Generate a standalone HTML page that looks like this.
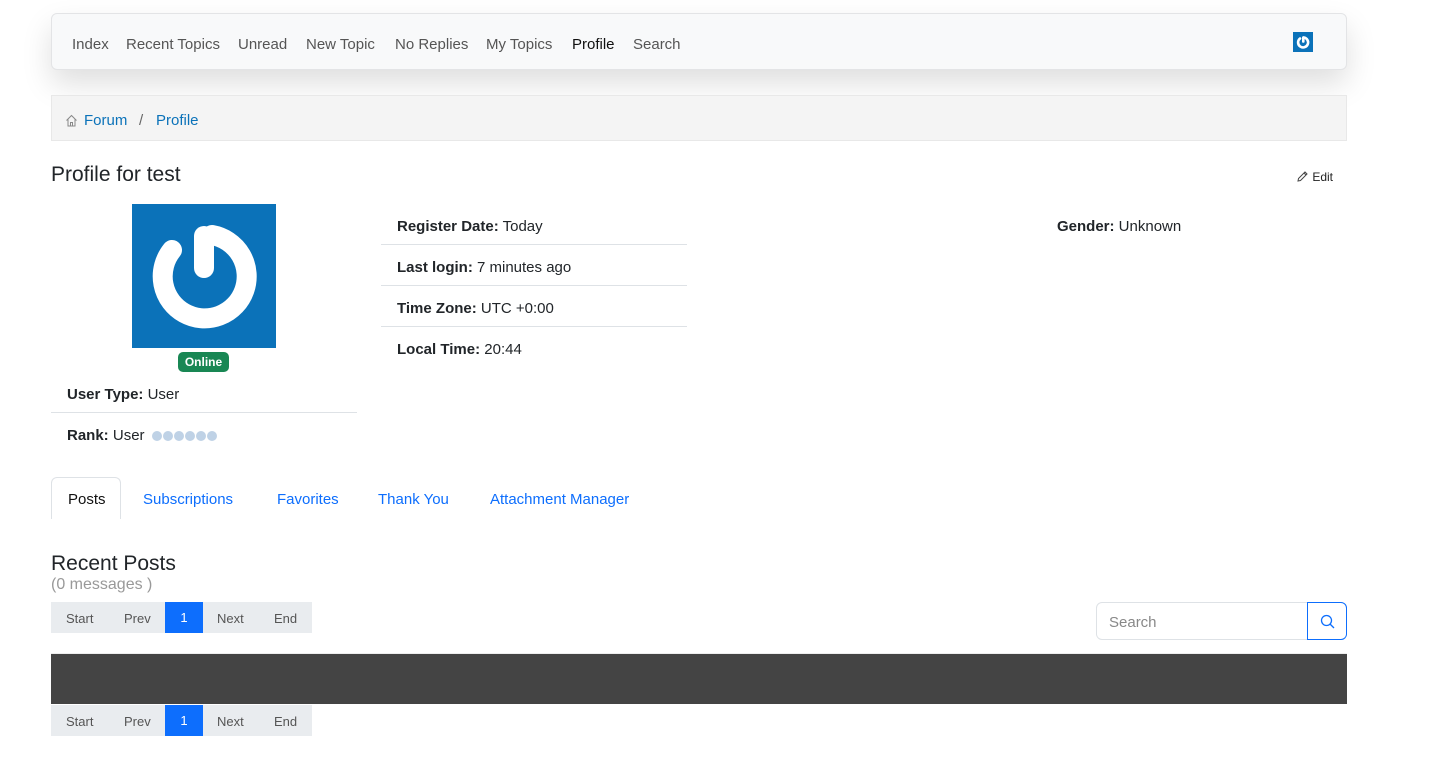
<!DOCTYPE html>
<html><head><meta charset="utf-8"><style>
*{box-sizing:border-box;margin:0;padding:0}
body{width:1439px;height:769px;background:#fff;font-family:"Liberation Sans",sans-serif;color:#212529;position:relative;overflow:hidden}
.a{position:absolute;white-space:nowrap}
.nav{left:51px;top:13px;width:1296px;height:57px;background:#f8f9fa;border:1px solid #e3e4e6;border-radius:6px;box-shadow:0 14px 30px rgba(0,0,0,.13)}
.nav span{position:absolute;top:22px;font-size:15px;color:#555}
.bc{left:51px;top:95px;width:1296px;height:46px;background:#f4f4f4;border:1px solid #e8e8e8}
.lnk{color:#0b72b9}
.row{font-size:15px}
.hr{position:absolute;height:1px;background:#dee2e6}
.pg{position:absolute;left:51px;height:31px;width:261px;background:#e9ecef;font-size:13px;color:#555}
.pg span{position:absolute;top:9px}
.pg .c{background:#0d6efd;color:#fff;top:0;height:31px;width:38px;left:114px;text-align:center;line-height:31px}
.tab{position:absolute;top:491px;font-size:15px;color:#0d6efd}
</style></head><body>
<div class="a nav">
<span style="left:20px">Index</span><span style="left:74px">Recent Topics</span><span style="left:186px">Unread</span><span style="left:254px">New Topic</span><span style="left:343px">No Replies</span><span style="left:434px">My Topics</span><span style="left:520px;color:#111">Profile</span><span style="left:581px">Search</span>
<svg style="position:absolute;left:1241px;top:18px" width="20" height="20" viewBox="0 0 20 20"><rect width="20" height="20" fill="#0b72b9"/><path d="M7 6.5A5 5 0 1 0 11 5.5" fill="none" stroke="#fff" stroke-width="2.6" stroke-linecap="round"/><path d="M10.3 5.5V9.5" stroke="#fff" stroke-width="2.6" stroke-linecap="round"/></svg>
</div>
<div class="a bc"><svg style="position:absolute;left:13px;top:18px" width="13" height="13" viewBox="0 0 13 13"><path d="M1.5 6.5L6.5 1.5L11.5 6.5M3 5.5V12H10V5.5M5.5 12V8.5H7.5V12" fill="none" stroke="#888" stroke-width="1"/></svg>
<span class="a lnk" style="left:32px;top:16px;font-size:15px">Forum</span><span class="a" style="left:87px;top:16px;font-size:15px;color:#666">/</span><span class="a lnk" style="left:104px;top:16px;font-size:15px">Profile</span></div>
<div class="a" style="left:51px;top:163px;font-size:21px">Profile for test</div>
<div class="a" style="left:1296px;top:170px;font-size:12px;color:#222"><svg width="13" height="13" viewBox="0 0 13 13" style="vertical-align:-2px"><path d="M2 11L2.5 8.5L9 2L11 4L4.5 10.5Z M8 3L10 5" fill="none" stroke="#444" stroke-width="1"/></svg> Edit</div>
<svg class="a" style="left:132px;top:204px" width="144" height="144" viewBox="0 0 144 144"><rect width="144" height="144" fill="#0b72b9"/><path d="M40 46A42 42 0 1 0 80 31" fill="none" stroke="#fff" stroke-width="20" stroke-linecap="round"/><path d="M72 32V64" stroke="#fff" stroke-width="20" stroke-linecap="round"/></svg>
<div class="a" style="left:178px;top:352px;width:51px;height:20px;background:#198754;border-radius:5px;color:#fff;font-size:12px;font-weight:bold;text-align:center;line-height:20px">Online</div>
<div class="a row" style="left:67px;top:386px"><b>User Type:</b> User</div>
<div class="hr" style="left:51px;top:412px;width:306px"></div>
<div class="a row" style="left:67px;top:427px"><b>Rank:</b> User <span style="display:inline-flex;gap:1px;vertical-align:-1px;margin-left:3px"><i style="width:10px;height:10px;border-radius:50%;background:#bfd2e6"></i><i style="width:10px;height:10px;border-radius:50%;background:#bfd2e6"></i><i style="width:10px;height:10px;border-radius:50%;background:#bfd2e6"></i><i style="width:10px;height:10px;border-radius:50%;background:#bfd2e6"></i><i style="width:10px;height:10px;border-radius:50%;background:#bfd2e6"></i><i style="width:10px;height:10px;border-radius:50%;background:#bfd2e6"></i></span></div>
<div class="a row" style="left:397px;top:218px"><b>Register Date:</b> Today</div>
<div class="hr" style="left:381px;top:244px;width:306px"></div>
<div class="a row" style="left:397px;top:259px"><b>Last login:</b> 7 minutes ago</div>
<div class="hr" style="left:381px;top:285px;width:306px"></div>
<div class="a row" style="left:397px;top:300px"><b>Time Zone:</b> UTC +0:00</div>
<div class="hr" style="left:381px;top:326px;width:306px"></div>
<div class="a row" style="left:397px;top:341px"><b>Local Time:</b> 20:44</div>
<div class="a row" style="left:1057px;top:218px"><b>Gender:</b> Unknown</div>
<div class="a" style="left:51px;top:477px;width:70px;height:42px;border:1px solid #dee2e6;border-bottom:none;border-radius:6px 6px 0 0;background:#fff"></div>
<div class="tab" style="left:68px;color:#111">Posts</div><div class="tab" style="left:143px">Subscriptions</div><div class="tab" style="left:277px">Favorites</div><div class="tab" style="left:378px">Thank You</div><div class="tab" style="left:490px">Attachment Manager</div>
<div class="a" style="left:51px;top:552px;font-size:21px">Recent Posts</div>
<div class="a" style="left:51px;top:576px;font-size:16px;color:#999">(0 messages )</div>
<div class="pg" style="top:602px"><span style="left:15px">Start</span><span style="left:73px">Prev</span><span class="c">1</span><span style="left:166px">Next</span><span style="left:223px">End</span></div>
<div class="a" style="left:1096px;top:602px;width:251px;height:38px;border:1px solid #dee2e6;border-radius:6px"></div>
<div class="a" style="left:1109px;top:614px;font-size:15px;color:#888">Search</div>
<div class="a" style="left:1307px;top:602px;width:40px;height:38px;border:1px solid #0d6efd;border-radius:0 6px 6px 0;background:#fff"><svg style="position:absolute;left:12px;top:11px" width="16" height="16" viewBox="0 0 16 16"><circle cx="6.5" cy="6.5" r="5" fill="none" stroke="#0d6efd" stroke-width="1.3"/><path d="M10 10L14 14" stroke="#0d6efd" stroke-width="1.3"/></svg></div>
<div class="a" style="left:51px;top:653px;width:1296px;height:51px;background:#444;border-top:1px solid #eee"></div>
<div class="pg" style="top:705px"><span style="left:15px">Start</span><span style="left:73px">Prev</span><span class="c">1</span><span style="left:166px">Next</span><span style="left:223px">End</span></div>
</body></html>
